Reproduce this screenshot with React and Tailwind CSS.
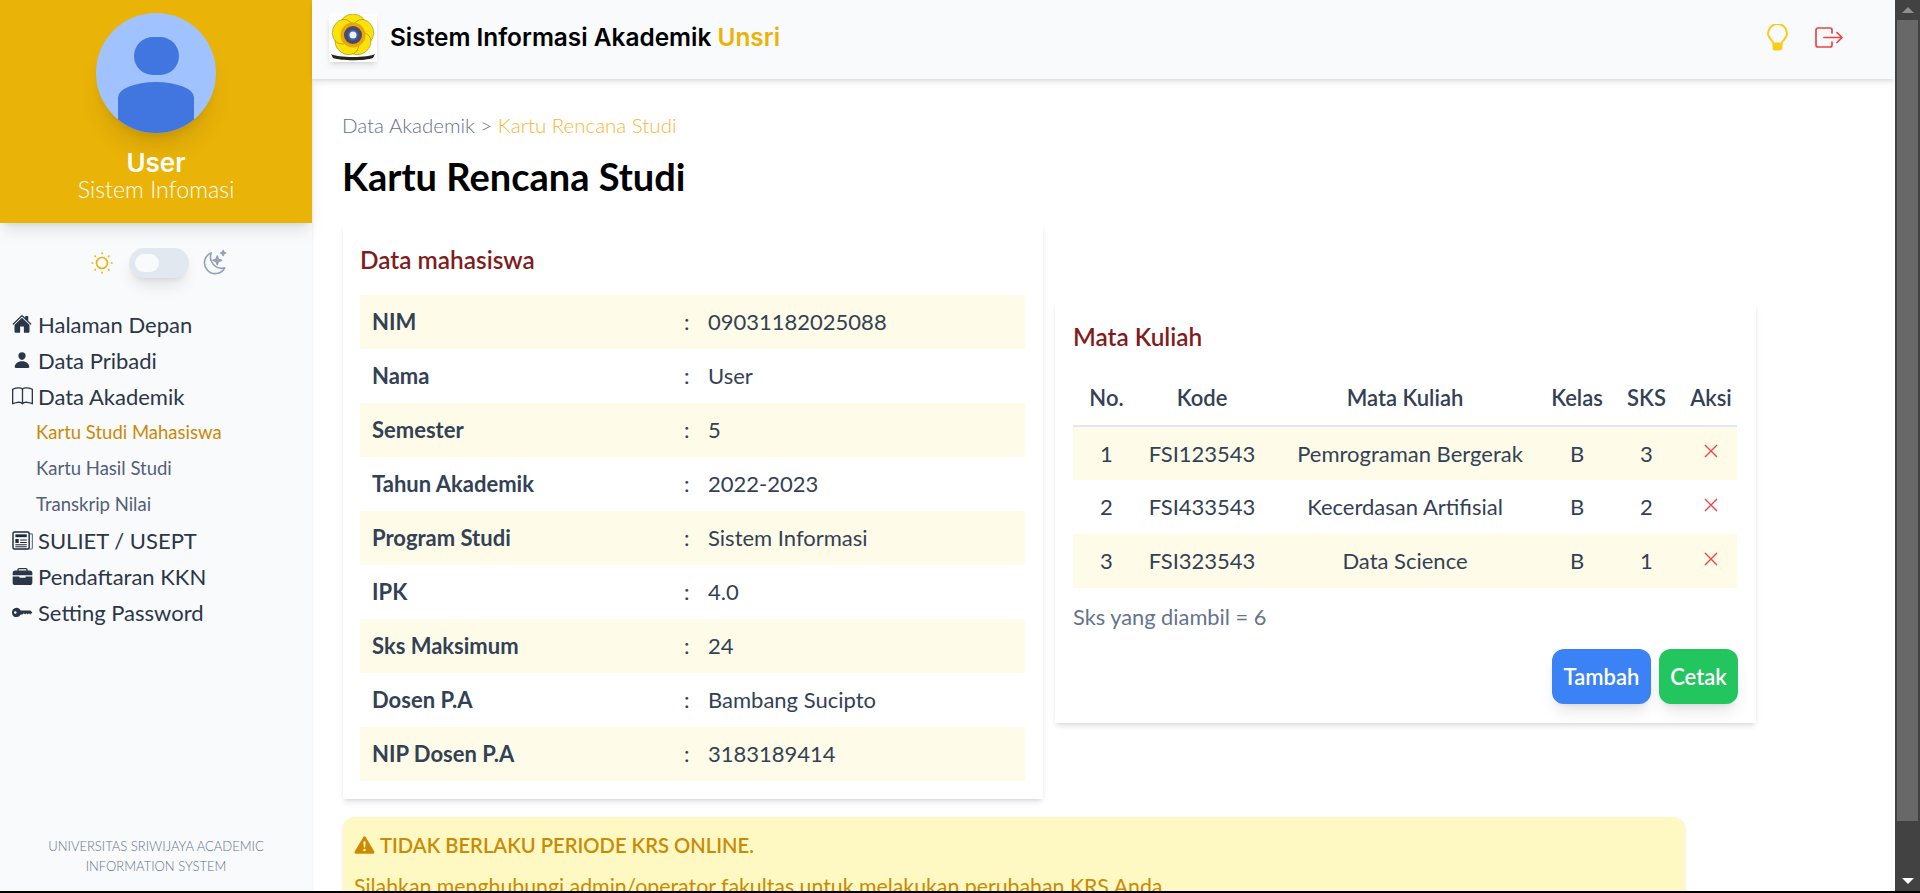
import React from "react";
import { IoHome, IoPerson, IoBriefcase } from "react-icons/io5";
import { BsBook, BsKeyFill, BsExclamationTriangleFill } from "react-icons/bs";

const nunito = "font-['Lato',sans-serif]";

function Sun() {
  return (
    <svg viewBox="0 0 24 24" className="w-6 h-6" fill="none" stroke="#eab308" strokeWidth="1.6" strokeLinecap="round">
      <circle cx="12" cy="12" r="5.5" />
      <path d="M12 2v.6M12 21.4v.6M2 12h.6M21.4 12h.6M5 5l.4.4M18.6 18.6l.4.4M5 19l.4-.4M18.6 5.4l.4-.4" />
    </svg>
  );
}
function Moon() {
  return (
    <svg viewBox="0 0 26 26" className="w-[28px] h-[28px]" fill="none" stroke="#94a3b8" strokeWidth="1.5" strokeLinejoin="round">
      <path d="M10.5 3.5A10 10 0 1 0 23 17.5 10.5 10.5 0 0 1 10.5 3.5Z" />
      <path d="M16 6.5l1 3 3 1-3 1-1 3-1-3-3-1 3-1Z" fill="#94a3b8" />
      <path d="M21.5 1.5l.6 1.6 1.6.6-1.6.6-.6 1.6-.6-1.6-1.6-.6 1.6-.6Z" fill="#94a3b8" />
    </svg>
  );
}
function Logo() {
  const petals = [0, 72, 144, 216, 288];
  return (
    <svg viewBox="0 0 48 48" className="w-12 h-12 bg-white shadow-md">
      {petals.map((a) => (
        <ellipse key={a} cx="24" cy="10.5" rx="12.5" ry="10.5" fill="#fde208" stroke="#6b5a10" strokeWidth="0.4" transform={`rotate(${a} 24 21)`} />
      ))}
      <circle cx="24" cy="21" r="12.5" fill="#e8a50c" />
      <circle cx="24" cy="21" r="9" fill="#4a4a62" />
      <circle cx="24" cy="21" r="5.5" fill="#3f5fb5" />
      <circle cx="24" cy="21" r="3.5" fill="#eef2fb" />
      <path d="M2 40c6 4 38 4 44 0l-2 4c-8 3-32 3-40 0Z" fill="#2b2118" />
    </svg>
  );
}
function Paper() {
  return (
    <svg viewBox="0 0 22 20" className="w-[21px] h-[19px]" fill="none">
      <path d="M18 3h2.6a.8.8 0 0 1 .8.8V18a1 1 0 0 1-1 1H18" stroke="#64748b" strokeWidth="1.2" />
      <rect x="1" y="1" width="17" height="18" rx="1.5" stroke="#1e293b" strokeWidth="1.5" />
      <rect x="3.5" y="3.5" width="12" height="3" fill="#1e293b" />
      <path d="M3.5 8.5h3.5v4H3.5zM8.5 9h7v1h-7zM8.5 11.5h7v1h-7zM3.5 14h12v1h-12zM3.5 16h12v1h-12z" fill="#1e293b" />
    </svg>
  );
}
function Bulb() {
  return (
    <svg viewBox="0 0 21 27" className="w-[21px] h-[27px]" fill="none">
      <path d="M6.5 19.5c0-2.5-5.5-4.8-5.5-10A9.5 9.5 0 0 1 20 9.500c0 5.200-5.500 7.500-5.500 10Z" stroke="#facc15" strokeWidth="2" strokeLinejoin="round" />
      <path d="M5.500 19h10v4.500a3 3 0 0 1-3 3h-4a3 3 0 0 1-3-3Z" fill="#facc15" />
    </svg>
  );
}

const data = [
  ["NIM", "09031182025088"],
  ["Nama", "User"],
  ["Semester", "5"],
  ["Tahun Akademik", "2022-2023"],
  ["Program Studi", "Sistem Informasi"],
  ["IPK", "4.0"],
  ["Sks Maksimum", "24"],
  ["Dosen P.A", "Bambang Sucipto"],
  ["NIP Dosen P.A", "3183189414"],
];
const courses = [
  ["1", "FSI123543", "Pemrograman Bergerak", "B", "3"],
  ["2", "FSI433543", "Kecerdasan Artifisial", "B", "2"],
  ["3", "FSI323543", "Data Science", "B", "1"],
];

function NavItem({ icon, children }) {
  return (
    <div className="h-9 flex items-center text-[22px] text-[#2b3648]">
      <span className="w-[38px] pl-3 flex items-center shrink-0">{icon}</span>
      <span>{children}</span>
    </div>
  );
}
function SubItem({ active, children }) {
  return (
    <div className={`h-9 flex items-center pl-9 pt-[2px] text-[18.5px] ${active ? "text-[#ca8a04]" : "text-[#526078]"}`}>{children}</div>
  );
}

export default function App() {
  return (
    <div className={`h-[893px] flex flex-col overflow-hidden bg-white ${nunito}`}>
      <div className="flex-1 min-h-0 flex">
        <aside className="w-[312px] shrink-0 bg-[#f8fafc] flex flex-col shadow-sm">
          <div className="h-[223px] bg-[#eab308] shadow-lg flex flex-col items-center pt-[13px] shrink-0">
            <div className="w-[120px] h-[120px] rounded-full bg-[#a0c3ff] shadow-xl overflow-hidden flex flex-col items-center">
              <div className="w-[45px] h-[45px] rounded-full bg-[#4175df] mt-[24px]" />
              <div className="w-[76px] h-[60px] rounded-t-[50%_30%] bg-[#4175df] mt-[7px]" />
            </div>
            <div className="mt-[14px] text-[26px] leading-[32px] font-semibold text-white font-['Inter',sans-serif]">User</div>
            <div className="-mt-[2px] text-[23.3px] leading-[24px] font-light text-white">Sistem Infomasi</div>
          </div>
          <div className="flex items-center justify-center mt-[25px] h-[30px] pl-[6px]">
            <Sun />
            <div className="w-[60px] h-[30px] rounded-full bg-[#e2e8f0] shadow-lg flex items-center pl-[6px] ml-[15px] mr-[11px]">
              <div className="w-6 h-[18px] rounded-full bg-[#f8fafc]" />
            </div>
            <Moon />
          </div>
          <nav className="mt-[28px]">
            <NavItem icon={<IoHome className="w-[20px] h-[20px]" />}>Halaman Depan</NavItem>
            <NavItem icon={<IoPerson className="w-[18px] h-[18px] ml-[1px]" />}>Data Pribadi</NavItem>
            <NavItem icon={<BsBook className="w-[21px] h-[21px]" />}>Data Akademik</NavItem>
            <SubItem active>Kartu Studi Mahasiswa</SubItem>
            <SubItem>Kartu Hasil Studi</SubItem>
            <SubItem>Transkrip Nilai</SubItem>
            <NavItem icon={<Paper />}>SULIET / USEPT</NavItem>
            <NavItem icon={<IoBriefcase className="w-[21px] h-[21px]" />}>Pendaftaran KKN</NavItem>
            <NavItem icon={<BsKeyFill className="w-[21px] h-[21px]" />}>Setting Password</NavItem>
          </nav>
          <div className="mt-auto mb-[15px] px-9 text-center text-[13px] leading-[20px] font-light text-[#64748b]">
            UNIVERSITAS SRIWIJAYA ACADEMIC INFORMATION SYSTEM
          </div>
        </aside>

        <div className="flex-1 min-w-0 flex flex-col">
          <header className="h-[79px] shrink-0 bg-[#f8fafc] shadow-md flex items-center pl-[17px] pr-[52px] pb-[4px]">
            <Logo />
            <div className="ml-[13px] text-[24.4px] font-semibold text-black font-['Inter',sans-serif]">
              Sistem Informasi Akademik <span className="text-[#eab308]">Unsri</span>
            </div>
            <div className="ml-auto flex items-center gap-[27px]">
              <Bulb />
              <svg viewBox="0 0 28 21" className="w-[28px] h-[21px]" fill="none" stroke="#ef4444" strokeWidth="1.7" strokeLinecap="round" strokeLinejoin="round">
                <path d="M17 6V3a2 2 0 0 0-2-2H3a2 2 0 0 0-2 2v15a2 2 0 0 0 2 2h12a2 2 0 0 0 2-2v-3" />
                <path d="M9 10.500h18M22 5.500l5 5-5 5" />
              </svg>
            </div>
          </header>

          <main className="flex-1 min-h-0 overflow-hidden pl-[31px] pt-[34px]">
            <div className="-ml-px text-[20.5px] leading-[24px] font-light text-[#64748b]">
              Data Akademik &gt; <span className="text-[#f7b733]">Kartu Rencana Studi</span>
            </div>
            <h1 className="-ml-px mt-[17px] text-[38px] leading-[44px] font-bold text-black">Kartu Rencana Studi</h1>

            <div className="flex items-center gap-3 mt-[26px] h-[575px]">
              <section className="w-[700px] shrink-0 h-[575px] bg-white shadow-md pl-[17px] pr-[18px] pt-[19px]">
                <h2 className="text-[24.4px] leading-[34px] font-semibold text-[#7f1d1d]">Data mahasiswa</h2>
                <div className="mt-[18px]">
                  {data.map(([k, v], i) => (
                    <div key={k} className={`h-[54px] flex items-center pb-[1px] text-[22px] text-[#334155] ${i % 2 === 0 ? "bg-[#fefce8]" : ""}`}>
                      <div className="w-[324px] pl-3 font-bold">{k}</div>
                      <div className="w-[24px]">:</div>
                      <div>{v}</div>
                    </div>
                  ))}
                </div>
              </section>

              <section className="w-[701px] shrink-0 h-[422px] bg-white shadow-md px-[18px] pt-[19px]">
                <h2 className="text-[24.4px] leading-[34px] font-semibold text-[#7f1d1d]">Mata Kuliah</h2>
                <table className="w-[664px] table-fixed text-[22px] text-[#334155] mt-[17px] text-center">
                  <colgroup>
                    <col className="w-[67px]" />
                    <col className="w-[124px]" />
                    <col className="w-[282px]" />
                    <col className="w-[62px]" />
                    <col className="w-[77px]" />
                    <col className="w-[52px]" />
                  </colgroup>
                  <thead>
                    <tr className="h-[55px] border-b-2 border-[#e2e8f0]">
                      {["No.", "Kode", "Mata Kuliah", "Kelas", "SKS", "Aksi"].map((h) => (
                        <th key={h} className="font-semibold">{h}</th>
                      ))}
                    </tr>
                  </thead>
                  <tbody>
                    {courses.map((r, i) => (
                      <tr key={r[0]} className={`h-[54px] ${i % 2 === 0 ? "bg-[#fefce8]" : ""}`}>
                        {r.map((c, j) => (
                          <td key={j} className={i === 0 && j === 2 ? "pl-[10px]" : ""}>{c}</td>
                        ))}
                        <td>
                          <svg viewBox="0 0 14 14" className="w-[14px] h-[14px] mx-auto -mt-[4px]" stroke="#ef4444" strokeWidth="1.4" fill="none">
                            <path d="M1 1l12 12M13 1L1 13" />
                          </svg>
                        </td>
                      </tr>
                    ))}
                  </tbody>
                </table>
                <p className="mt-[15px] text-[21.8px] leading-[28px] text-[#64748b]">Sks yang diambil = 6</p>
                <div className="flex justify-end gap-2 mt-[18px]">
                  <button className="w-[99px] h-[55px] rounded-xl bg-[#3b82f6] text-white font-semibold text-[22px] shadow-lg">Tambah</button>
                  <button className="w-[79px] h-[55px] rounded-xl bg-[#22c55e] text-white font-semibold text-[22px] shadow-lg">Cetak</button>
                </div>
              </section>
            </div>

            <div className="w-[1342px] mt-[18px] h-[200px] rounded-xl bg-[#fef9c3] shadow-sm px-[11px] pt-[14px] text-[#ca8a04]">
              <div className="flex items-center gap-[5px] text-[20.2px] leading-[28px] font-semibold">
                <BsExclamationTriangleFill className="w-[21px] h-[20px]" />
                TIDAK BERLAKU PERIODE KRS ONLINE.
              </div>
              <p className="mt-[13px] text-[21.3px] leading-[28px]">Silahkan menghubungi admin/operator fakultas untuk melakukan perubahan KRS Anda</p>
            </div>
          </main>
        </div>

        <div className="w-[25px] shrink-0 bg-[#424242] flex flex-col items-center">
          <div className="h-5 flex items-center justify-center">
            <div className="w-0 h-0 border-x-[6px] border-x-transparent border-b-[6px] border-b-[#8e8e8e]" />
          </div>
          <div className="w-[21px] h-[801px] bg-[#686868]" />
          <div className="mt-auto h-[20px] flex items-center justify-center">
            <div className="w-0 h-0 border-x-[6px] border-x-transparent border-t-[6px] border-t-white" />
          </div>
        </div>
      </div>
      <div className="h-[2px] bg-black shrink-0" />
    </div>
  );
}
